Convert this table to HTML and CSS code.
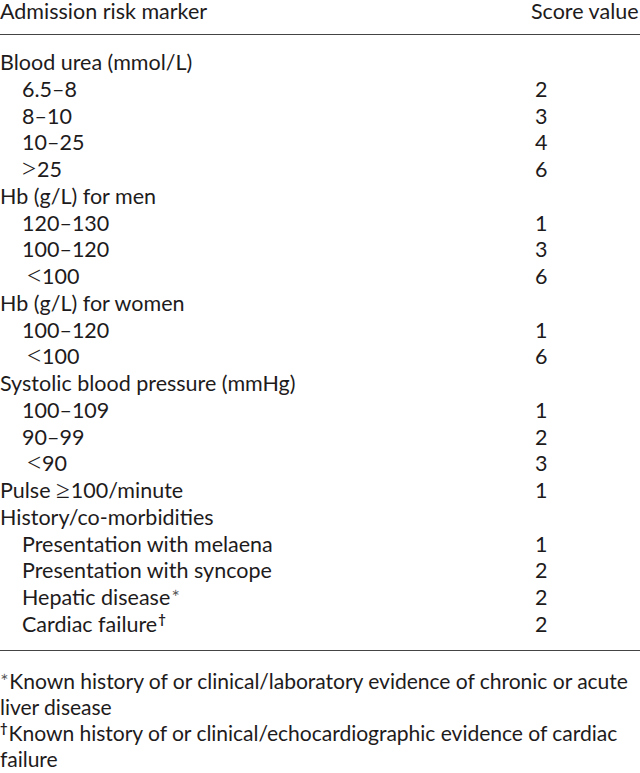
FILE: index.html
```html
<!DOCTYPE html>
<html lang="en">
<head>
<meta charset="utf-8">
<title>Admission risk marker</title>
<link rel="stylesheet" href="styles.css">
</head>
<body>
<div class="sheet">
  <div class="head">
    <span class="c1">Admission risk marker</span>
    <span class="c2">Score value</span>
  </div>
  <div class="body">
    <div class="row"><span class="c1">Blood urea (mmol/L)</span><span class="c2"></span></div>
    <div class="row"><span class="c1 sub">6.5–8</span><span class="c2">2</span></div>
    <div class="row"><span class="c1 sub">8–10</span><span class="c2">3</span></div>
    <div class="row"><span class="c1 sub">10–25</span><span class="c2">4</span></div>
    <div class="row"><span class="c1 sub"><span class="math">&gt;</span>25</span><span class="c2">6</span></div>
    <div class="row"><span class="c1">Hb (g/L) for men</span><span class="c2"></span></div>
    <div class="row"><span class="c1 sub">120–130</span><span class="c2">1</span></div>
    <div class="row"><span class="c1 sub">100–120</span><span class="c2">3</span></div>
    <div class="row"><span class="c1 sub lt"><span class="math">&lt;</span>100</span><span class="c2">6</span></div>
    <div class="row"><span class="c1">Hb (g/L) for women</span><span class="c2"></span></div>
    <div class="row"><span class="c1 sub">100–120</span><span class="c2">1</span></div>
    <div class="row"><span class="c1 sub lt"><span class="math">&lt;</span>100</span><span class="c2">6</span></div>
    <div class="row"><span class="c1">Systolic blood pressure (mmHg)</span><span class="c2"></span></div>
    <div class="row"><span class="c1 sub">100–109</span><span class="c2">1</span></div>
    <div class="row"><span class="c1 sub">90–99</span><span class="c2">2</span></div>
    <div class="row"><span class="c1 sub lt"><span class="math">&lt;</span>90</span><span class="c2">3</span></div>
    <div class="row"><span class="c1">Pulse <span class="math">≥</span>100/minute</span><span class="c2">1</span></div>
    <div class="row"><span class="c1">History/co-morbidities</span><span class="c2"></span></div>
    <div class="row"><span class="c1 sub">Presentation with melaena</span><span class="c2">1</span></div>
    <div class="row"><span class="c1 sub">Presentation with syncope</span><span class="c2">2</span></div>
    <div class="row"><span class="c1 sub">Hepatic disease<sup class="ast">∗</sup></span><span class="c2">2</span></div>
    <div class="row"><span class="c1 sub">Cardiac failure<sup class="dag">†</sup></span><span class="c2">2</span></div>
  </div>
  <div class="notes">
    <p><sup class="ast">∗</sup>Known history of or clinical/laboratory evidence of chronic or acute liver disease</p>
    <p><sup class="dag">†</sup>Known history of or clinical/echocardiographic evidence of cardiac failure</p>
  </div>
</div>
</body>
</html>
```

FILE: styles.css
```css
html, body {
  margin: 0;
  padding: 0;
  background: #ffffff;
}
.sheet {
  width: 640px;
  font-family: Lato, "Open Sans", "Liberation Sans", sans-serif;
  font-size: 21.5px;
  color: #1e1b1c;
  overflow: hidden;
}
.head {
  display: grid;
  grid-template-columns: 531px 1fr;
  line-height: 23px;
  padding-bottom: 11px;
  border-bottom: 1.5px solid #444;
  white-space: nowrap;
}
.body {
  padding-top: 14px;
  padding-bottom: 12px;
  border-bottom: 1.5px solid #444;
}
.row {
  display: grid;
  grid-template-columns: 531px 1fr;
  height: 26.75px;
  line-height: 26.75px;
  white-space: nowrap;
}
.sub {
  padding-left: 22px;
}
.sub.lt {
  padding-left: 27px;
}
.c2 {
  padding-left: 4px;
}
.head .c2 {
  padding-left: 0;
}
.math {
  font-family: "Liberation Serif", "DejaVu Serif", serif;
  font-size: 25px;
  line-height: 0;
  margin-right: 1px;
}
.ast {
  font-family: "DejaVu Sans", sans-serif;
  font-size: 10px;
  vertical-align: 9px;
  line-height: 0;
  margin-left: 1px;
  color: #555;
}
.dag {
  font-size: 13px;
  font-weight: 700;
  vertical-align: 8px;
  line-height: 0;
  margin-left: 1px;
}
.notes {
  padding-top: 17px;
  font-size: 21.1px;
  letter-spacing: -0.05px;
}
.notes p {
  margin: 0;
  line-height: 26px;
}
.notes .ast, .notes .dag {
  margin-left: 0;
  margin-right: 1px;
}
```
